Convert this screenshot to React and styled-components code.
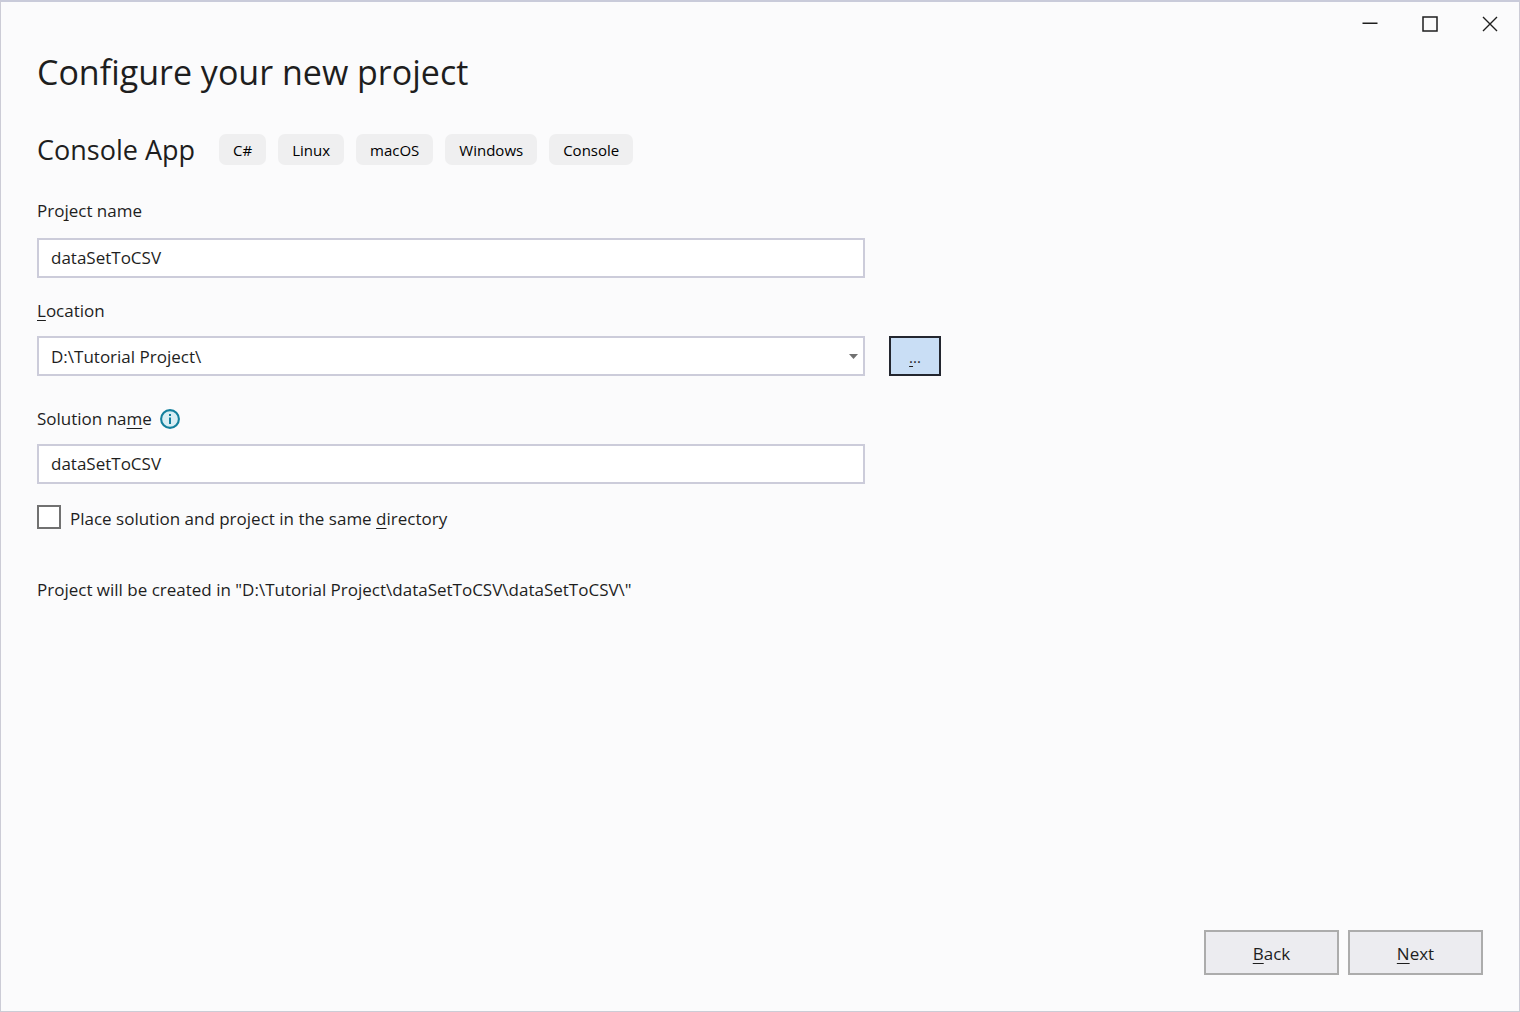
import React, { useState } from "react";
import styled, { createGlobalStyle } from "styled-components";

const GlobalStyle = createGlobalStyle`
  *, *::before, *::after { box-sizing: border-box; }
  body {
    margin: 0;
    background: #fbfbfc;
    color: #1e1e1e;
    font-family: "Open Sans", "Noto Sans", sans-serif;
    font-size: 17px;
    line-height: 24px;
  }
  button, input, select { font: inherit; color: inherit; }
`;

const Window = styled.div`
  display: flex;
  flex-direction: column;
  min-height: 100vh;
  border: 1px solid #ccccd6;
  border-top: 2px solid #c9cbda;
`;

const TitleBar = styled.header`
  display: flex;
  justify-content: flex-end;
  margin-right: -1px;
`;

const CaptionButton = styled.button`
  display: grid;
  place-items: center;
  width: 60px;
  height: 44px;
  padding: 0;
  border: 0;
  background: none;
`;

const Main = styled.main`
  flex: 1;
  padding: 0 36px;
`;

const Title = styled.h1`
  margin: 0;
  font-size: 34px;
  line-height: 52px;
  font-weight: 400;
`;

const Template = styled.section`
  display: flex;
  flex-wrap: wrap;
  align-items: center;
  gap: 24px;
  margin-top: 30px;
`;

const TemplateName = styled.h2`
  margin: 0;
  padding-top: 2px;
  font-size: 27px;
  line-height: 40px;
  font-weight: 400;
`;

const Tags = styled.ul`
  display: flex;
  gap: 12px;
  margin: 0;
  padding: 0;
  list-style: none;
`;

const Tag = styled.li`
  padding: 5px 14px 3px;
  border-radius: 7px;
  background: #efeff0;
  color: #000;
  font-size: 15px;
  line-height: 23px;
`;

const Form = styled.form`
  display: flex;
  flex-direction: column;
  max-width: 828px;
  margin-top: 29px;
`;

const Field = styled.div`
  display: flex;
  flex-direction: column;
  gap: ${({ $gap }) => $gap || 13}px;
  margin-bottom: ${({ $after }) => $after}px;
`;

const LabelRow = styled.div`
  display: flex;
  align-items: center;
  gap: 8px;
`;

const Mnemonic = styled.span`
  text-decoration: underline;
  text-decoration-thickness: 1px;
  text-underline-offset: 3px;
  text-decoration-skip-ink: none;
`;

const TextBox = styled.input`
  width: 100%;
  height: 40px;
  padding: 0 12px 2px;
  border: 2px solid #ccccda;
  border-radius: 0;
  background: #fff;
  outline: 0;
`;

const LocationRow = styled.div`
  display: grid;
  grid-template-columns: 100% 52px;
  gap: 24px;
`;

const ComboBox = styled.div`
  display: grid;
  align-items: center;

  > * { grid-area: 1 / 1; }
  > svg { justify-self: end; margin-right: 7px; pointer-events: none; }
`;

const Select = styled.select`
  appearance: none;
  width: 100%;
  height: 40px;
  padding: 2px 12px 0;
  border: 2px solid #ccccda;
  border-radius: 0;
  background: #fff;
  outline: 0;
`;

const BrowseButton = styled.button`
  height: 40px;
  padding: 2px 0 0;
  border: 2px solid #23262f;
  background: #c9def5;
  font-size: 15px;
`;

const CheckRow = styled.label`
  display: flex;
  align-items: flex-start;
  gap: 9px;
  height: 24px;
`;

const CheckBox = styled.input`
  appearance: none;
  width: 24px;
  height: 24px;
  margin: 0;
  border: 2px solid #717171;
  background: #fff;

  &:checked { background: #717171; box-shadow: inset 0 0 0 4px #fff; }
`;

const CheckText = styled.span`
  padding-top: 2px;
`;

const Summary = styled.p`
  margin: 49px 0 0;
`;

const Footer = styled.footer`
  display: flex;
  justify-content: flex-end;
  gap: 9px;
  padding: 36px;
`;

const FooterButton = styled.button`
  width: 135px;
  height: 45px;
  padding: 2px 0 0;
  border: 2px solid #acacac;
  background: #ececf0;
`;

const InfoIcon = () => (
  <svg width="20" height="20" viewBox="0 0 20 20" role="img" aria-label="Information">
    <circle cx="10" cy="10" r="8.9" fill="#d9eef4" stroke="#14809d" strokeWidth="2.1" />
    <rect x="9" y="8.5" width="2" height="6.5" fill="#14809d" />
    <rect x="9" y="5" width="2" height="2" fill="#14809d" />
  </svg>
);

const TAGS = ["C#", "Linux", "macOS", "Windows", "Console"];

export default function App() {
  const [project, setProject] = useState("dataSetToCSV");
  const [solution, setSolution] = useState("dataSetToCSV");

  return (
    <>
      <GlobalStyle />
      <Window>
        <TitleBar>
          <CaptionButton type="button" aria-label="Minimize">
            <svg width="16" height="16" viewBox="0 0 16 16">
              <path d="M0.5 7.25H15.5" stroke="#1e1e1e" strokeWidth="1.5" />
            </svg>
          </CaptionButton>
          <CaptionButton type="button" aria-label="Maximize">
            <svg width="16" height="16" viewBox="0 0 16 16">
              <rect x="1" y="1" width="14" height="14" fill="none" stroke="#1e1e1e" strokeWidth="1.5" />
            </svg>
          </CaptionButton>
          <CaptionButton type="button" aria-label="Close">
            <svg width="16" height="16" viewBox="0 0 16 16">
              <path d="M1 1L15 15M15 1L1 15" stroke="#1e1e1e" strokeWidth="1.4" />
            </svg>
          </CaptionButton>
        </TitleBar>

        <Main>
          <Title>Configure your new project</Title>
          <Template>
            <TemplateName>Console App</TemplateName>
            <Tags>
              {TAGS.map((tag) => (
                <Tag key={tag}>{tag}</Tag>
              ))}
            </Tags>
          </Template>

          <Form id="project-form" onSubmit={(e) => e.preventDefault()}>
            <Field $gap={15} $after={21}>
              <label htmlFor="project">
                Pro<Mnemonic>j</Mnemonic>ect name
              </label>
              <TextBox id="project" value={project} onChange={(e) => setProject(e.target.value)} />
            </Field>

            <Field $after={31}>
              <label htmlFor="location">
                <Mnemonic>L</Mnemonic>ocation
              </label>
              <LocationRow>
                <ComboBox>
                  <Select id="location">
                    <option>D:\Tutorial Project\</option>
                  </Select>
                  <svg width="9" height="5" viewBox="0 0 9 5">
                    <path d="M0 0H9L4.5 5Z" fill="#717171" />
                  </svg>
                </ComboBox>
                <BrowseButton type="button" aria-label="Browse">
                  <Mnemonic>.</Mnemonic>..
                </BrowseButton>
              </LocationRow>
            </Field>

            <Field $after={21}>
              <LabelRow>
                <label htmlFor="solution">
                  Solution na<Mnemonic>m</Mnemonic>e
                </label>
                <InfoIcon />
              </LabelRow>
              <TextBox id="solution" value={solution} onChange={(e) => setSolution(e.target.value)} />
            </Field>

            <CheckRow>
              <CheckBox type="checkbox" />
              <CheckText>
                Place solution and project in the same <Mnemonic>d</Mnemonic>irectory
              </CheckText>
            </CheckRow>
          </Form>

          <Summary>
            Project will be created in "D:\Tutorial Project\{solution}\{project}\"
          </Summary>
        </Main>

        <Footer>
          <FooterButton type="button">
            <Mnemonic>B</Mnemonic>ack
          </FooterButton>
          <FooterButton type="submit" form="project-form">
            <Mnemonic>N</Mnemonic>ext
          </FooterButton>
        </Footer>
      </Window>
    </>
  );
}
